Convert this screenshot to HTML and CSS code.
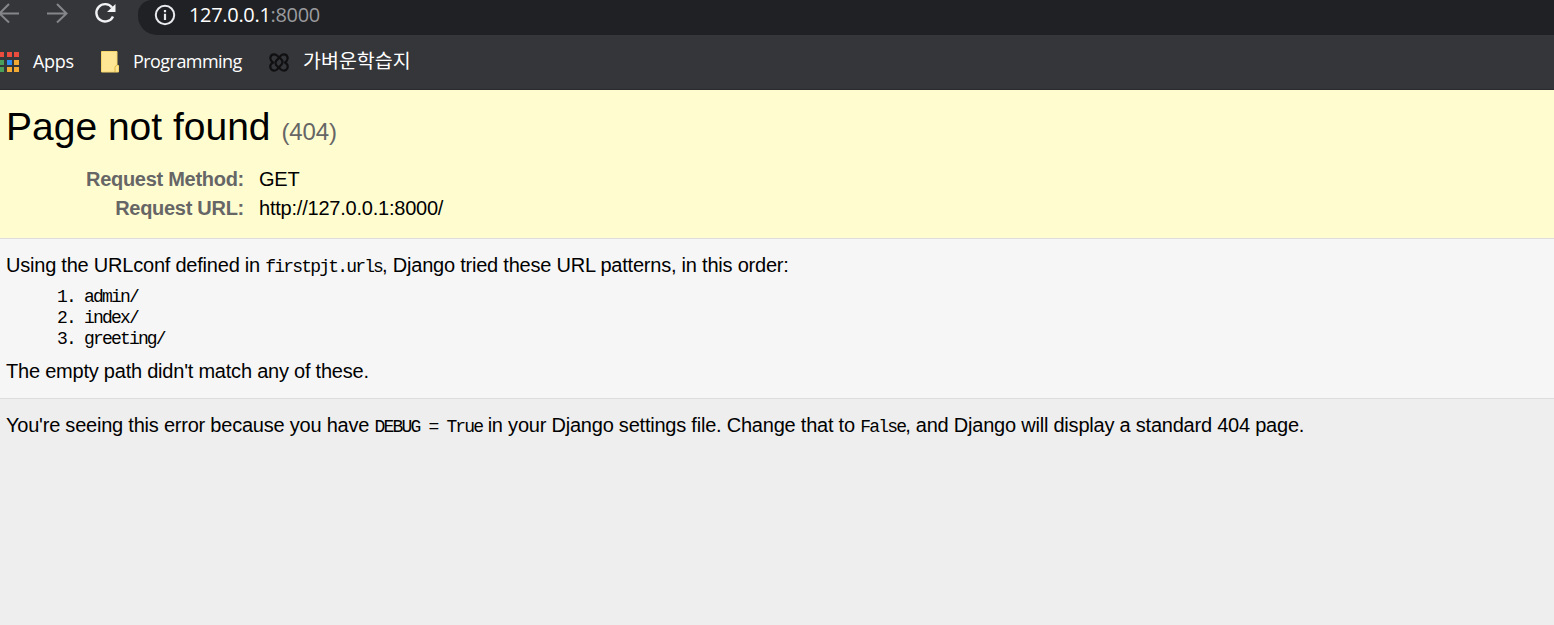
FILE: index.html
```html
<!DOCTYPE html>
<html lang="en">
<head>
<meta charset="utf-8">
<title>Page not found</title>
<link rel="stylesheet" href="styles.css">
</head>
<body>
<div class="browser">
  <div class="toolbar">
    <svg class="nav-icons" width="138" height="35" viewBox="0 0 138 35" fill="none">
      <g stroke="#85868a" stroke-width="2"><path d="M19 13.500H0M9 4L-.5 13.500L9 22.500M47 13.500H66M57 4L66.500 13.500L57 22.500"/></g>
      <path d="M112 7.500A8.700 8.700 0 1 0 113 16.500" stroke="#f1f3f4" stroke-width="2.400"/>
      <path d="M115.500 4V12H107Z" fill="#f1f3f4"/>
    </svg>
    <div class="address">
      <svg width="22" height="22" viewBox="0 0 22 22" fill="none"><circle cx="11" cy="11" r="9.200" stroke="#e8eaed" stroke-width="2"/><path d="M11 9.700V16M11 6V8.200" stroke="#e8eaed" stroke-width="2.200"/></svg>
      <span class="url">127.0.0.1<span class="port">:8000</span></span>
    </div>
  </div>
  <div class="bookmarks">
    <svg class="apps-icon" width="19" height="21" viewBox="0 0 19 21">
      <path d="M0 0h4v5H0zM7 0h5v5H7zM14 0h5v5h-5z" fill="#ea4c3d"/>
      <path d="M0 8h4v5H0zM0 15h4v5H0z" fill="#4aa05b"/><path d="M7 8h5v5H7z" fill="#2d8cf0"/>
      <path d="M14 8h5v5h-5zM7 15h5v5H7zM14 15h5v5h-5z" fill="#f3aa35"/>
    </svg>
    <span class="label apps">Apps</span>
    <svg class="folder" width="19" height="22" viewBox="0 0 19 22"><path d="M1.500 .500H17V14.500H18.500V21H1.500Z" fill="#ffe694" stroke="#f5d56c"/><path d="M15 21V16.500Q15 14.500 17 14.500" fill="none" stroke="#dfb63f"/></svg>
    <span class="label programming">Programming</span>
    <svg class="knot" width="20" height="19" viewBox="0 0 20 19" fill="none" stroke="#101012" stroke-width="2.200" stroke-linecap="round" stroke-linejoin="round"><path d="M4 9.500Q1.200 7.500 1.300 4.700Q2 1 5.500 1.300Q7 1.500 8 2.500L12.500 6.500Q14.500 9 12.500 11.500L8 16.500Q5.500 18.500 3 17Q.500 15 1.600 12Q2.300 10.500 4 9.500"/><path d="M16 9.500Q18.800 7.500 18.700 4.700Q18 1 14.500 1.300Q13 1.500 12 2.500L7.500 7.500Q5.500 10 7.500 12.500L12 16.500Q14.500 18.500 17 17Q19.500 15 18.400 12Q17.700 10.500 16 9.500"/></svg>
    <span class="label korean">가벼운학습지</span>
  </div>
</div>
<div class="summary">
  <h1>Page not found <span class="status">(404)</span></h1>
  <table class="meta">
    <tr><th>Request Method:</th><td>GET</td></tr>
    <tr><th>Request URL:</th><td>http://127.0.0.1:8000/</td></tr>
  </table>
</div>
<div class="info">
  <p>Using the URLconf defined in <code>firstpjt.urls</code>, Django tried these URL patterns, in this order:</p>
  <ol><li>admin/</li><li>index/</li><li>greeting/</li></ol>
  <p>The empty path didn't match any of these.</p>
</div>
<div class="explanation">
  <p>You're seeing this error because you have <code>DEBUG = True</code> in your Django settings file. Change that to <code>False</code>, and Django will display a standard 404 page.</p>
</div>
</body>
</html>
```
FILE: styles.css
```css
* { box-sizing: border-box; margin: 0; padding: 0; }
body { background: #eee; color: #000; font: 20px/24px "Liberation Sans", Arial, sans-serif; letter-spacing: -.22px; overflow: hidden; height: 625px; }
svg { display: block; flex: none; }
.browser { height: 90px; background: #35363a; border-bottom: 1px solid #292a2d; }
.toolbar { display: flex; height: 35px; }
.address { flex: 1; display: flex; align-items: center; height: 35px; padding: 0 0 6px 16px; gap: 13px; background: #202124; border-radius: 14px 0 0 19px; color: #fff; font: 20px/28px "Open Sans", "Noto Sans", sans-serif; }
.url { letter-spacing: -.320px; }
.port { color: #9a9b9e; }
.bookmarks { display: flex; align-items: center; height: 54px; color: #fff; font: 18px/24px "Open Sans", "Noto Sans", "Noto Sans CJK KR", sans-serif; }
.label { white-space: nowrap; padding-bottom: 2px; }
.apps { width: 67px; margin-left: 14px; letter-spacing: -.3px; }
.programming { width: 111px; margin-left: 14px; letter-spacing: -.550px; }
.knot { margin-left: 25px; }
.korean { margin-left: 14px; padding-bottom: 4px; font-family: "Noto Sans CJK KR", sans-serif; font-size: 19.500px; letter-spacing: 0; }
.summary { height: 149px; padding: 14px 6px 0; background: #fffdd0; border-bottom: 1px solid #ddd; }
h1 { font-size: 39px; line-height: 46px; font-weight: 400; letter-spacing: 0; }
.status { color: #666; font-size: 24px; letter-spacing: -.1px; }
.meta { margin-top: 10px; border-collapse: collapse; line-height: 29px; }
.meta th { width: 238px; text-align: right; color: #666; height: 29px; letter-spacing: -.280px; }
.meta td { padding-left: 15px; }
.info { height: 160px; padding: 14px 6px 0; background: #f6f6f6; border-bottom: 1px solid #ddd; }
p { white-space: nowrap; }
code, ol { font-family: "Liberation Mono", monospace; font-size: 18px; letter-spacing: -1.820px; }
code { line-height: 1; }
ol { padding-left: 78px; margin: 10px 0 9px; line-height: 21px; }
.explanation { padding: 14px 6px 0; }
```
